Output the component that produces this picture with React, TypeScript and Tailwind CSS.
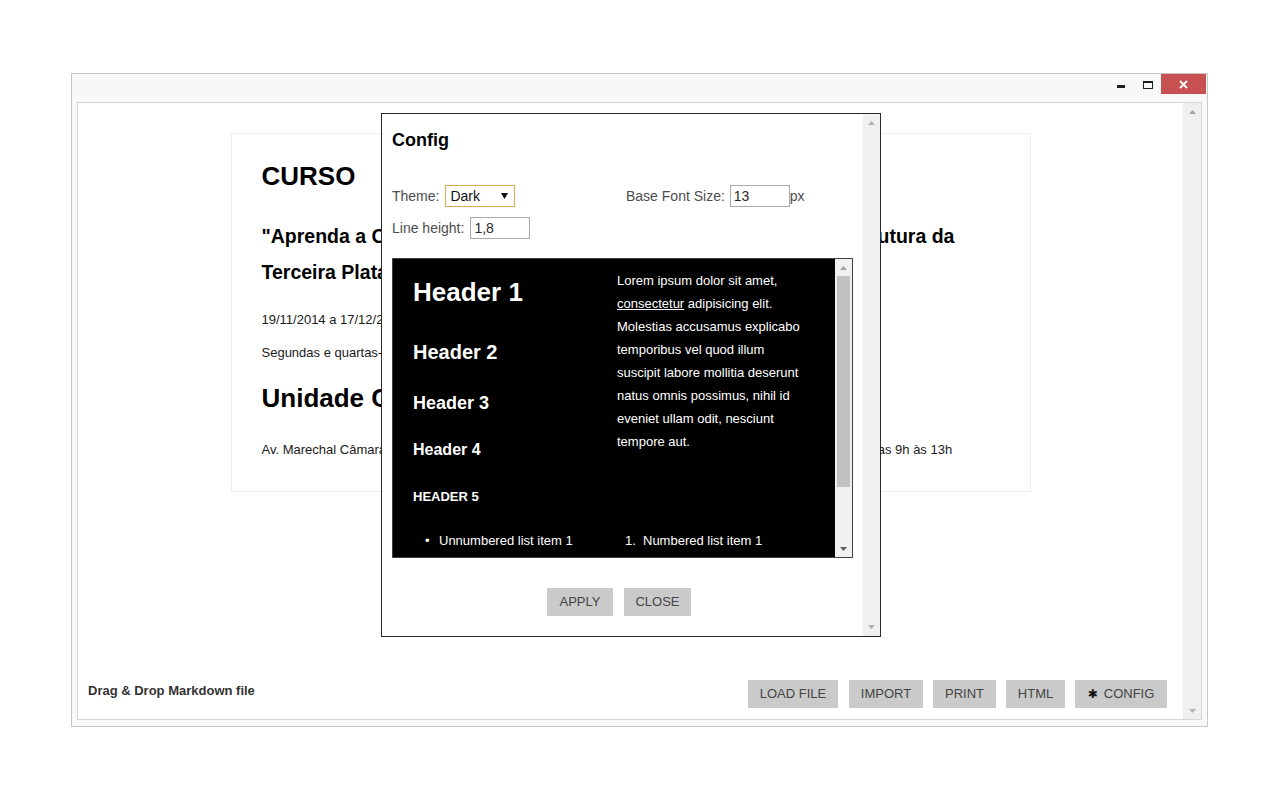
import React from "react";

function Tri({ dir, color = "#a3a3a3" }: { dir: "up" | "down"; color?: string }) {
  return (
    <svg width="7" height="4" viewBox="0 0 7 4" className="block">
      {dir === "up" ? (
        <polygon points="0,4 7,4 3.5,0" fill={color} />
      ) : (
        <polygon points="0,0 7,0 3.5,4" fill={color} />
      )}
    </svg>
  );
}

function GrayBtn({ children, className = "" }: { children: React.ReactNode; className?: string }) {
  return (
    <div
      className={
        "h-[28px] flex items-center justify-center bg-[#cacaca] text-[#444] text-[13px] uppercase " +
        className
      }
    >
      {children}
    </div>
  );
}

export default function App() {
  return (
    <div className="w-[1280px] h-[800px] bg-white relative overflow-hidden font-['Liberation_Sans',Arial,sans-serif]">
      <div className="pt-[73px] pl-[71px]">
        {/* window */}
        <div className="w-[1137px] h-[654px] border border-[#c9c9c9] bg-[#f8f8f8] flex flex-col">
          {/* title bar */}
          <div className="h-[28px] flex items-start justify-end">
            <div className="w-[8px] h-[3px] bg-[#1e1e1e] mt-[11px]" />
            <div className="w-[10px] h-[8px] border border-[#1e1e1e] border-t-2 mt-[7px] ml-[18px]" />
            <div className="w-[45px] h-[20px] bg-[#c75050] ml-[8px] mr-[1px] flex items-center justify-center">
              <svg width="9" height="9" viewBox="0 0 9 9">
                <path d="M1 1 L8 8 M8 1 L1 8" stroke="#fff" strokeWidth="1.8" />
              </svg>
            </div>
          </div>
          {/* inner frame */}
          <div className="mx-[5px] h-[618px] border border-[#d6d6d6] bg-white flex">
            <div className="flex-1 flex flex-col">
              {/* document card */}
              <div className="mx-auto mt-[30px] w-[800px] h-[359px] border border-[#eeeeee] px-[30px] pt-[19px] text-[#1a1a1a]">
                <h1 className="text-[26px] leading-[46px] font-bold text-black">CURSO</h1>
                <h2 className="mt-[19px] text-[19.5px] leading-[36px] font-bold text-black whitespace-nowrap">
                  <span className="inline-block w-[538px]">"Aprenda a Construir Aplicações na</span>
                  Infraestrutura da
                  <br />
                  Terceira Plataforma"
                </h2>
                <p className="mt-[18px] text-[13px] leading-[23px]">19/11/2014 a 17/12/2014</p>
                <p className="mt-[10px] text-[13px] leading-[23px]">Segundas e quartas-feiras, das 19h às 22h</p>
                <h1 className="mt-[11px] text-[26px] leading-[46px] font-bold text-black">Unidade Centro</h1>
                <p className="mt-[17px] text-[13px] leading-[23px] whitespace-nowrap">
                  <span className="inline-block w-[609px]">Av. Marechal Câmara, 160 - Centro - Rio de Janeiro</span>
                  das 9h às 13h
                </p>
              </div>
              {/* bottom bar */}
              <div className="mt-auto pl-[10px] pr-[16px] pb-[11px] flex items-center justify-between">
                <div className="mb-[6px] text-[13px] font-bold text-[#333]">Drag &amp; Drop Markdown file</div>
                <div className="flex gap-[10px]">
                  <GrayBtn className="w-[90px] mr-[1px]">Load File</GrayBtn>
                  <GrayBtn className="w-[74px]">Import</GrayBtn>
                  <GrayBtn className="w-[63px]">Print</GrayBtn>
                  <GrayBtn className="w-[59px]">HTML</GrayBtn>
                  <GrayBtn className="w-[92px]">
                    <span className="text-[12px] mr-[6px] text-[#111] font-['DejaVu_Sans',sans-serif]">✱</span>
                    Config
                  </GrayBtn>
                </div>
              </div>
            </div>
            {/* main scrollbar */}
            <div className="w-[18px] bg-[#f0f0f0] flex flex-col items-center justify-between pt-[7px] pb-[6px]">
              <Tri dir="up" />
              <Tri dir="down" color="#b5b5b5" />
            </div>
          </div>
        </div>
      </div>

      {/* Config modal */}
      <div className="absolute left-[381px] top-[113px] w-[500px] h-[524px] border border-[#2a2a2a] bg-white flex">
        <div className="flex-1 px-[10px] pt-[14px] flex flex-col">
          <div className="text-[18px] leading-[24px] font-bold text-black">Config</div>
          <div className="mt-[33px] h-[22px] flex items-center text-[14px] text-[#4d4d4d]">
            <div className="w-[234px] flex items-center">
              <span>Theme:</span>
              <div className="ml-[6px] w-[70px] h-[22px] border border-[#e2aa55] flex items-center justify-between pl-[4px] pr-[6px] text-[#111]">
                <span>Dark</span>
                <svg width="7" height="6" viewBox="0 0 7 6">
                  <polygon points="0,0 7,0 3.5,6" fill="#111" />
                </svg>
              </div>
            </div>
            <span>Base Font Size:</span>
            <div className="ml-[5px] w-[60px] h-[22px] border border-[#a9a9a9] flex items-center pl-[3px] text-[#2a2a2a]">13</div>
            <span>px</span>
          </div>
          <div className="mt-[10px] h-[22px] flex items-center text-[14px] text-[#4d4d4d]">
            <span>Line height:</span>
            <div className="ml-[6px] w-[60px] h-[22px] border border-[#a9a9a9] flex items-center pl-[3px] text-[#2a2a2a]">1,8</div>
          </div>
          {/* preview */}
          <div className="mt-[19px] w-[461px] h-[300px] border border-[#404040] bg-black flex">
            <div className="flex-1 overflow-hidden pl-[20px] pt-[10px] text-white grid grid-cols-[204px_1fr] gap-y-[20px] content-start">
              <div className="flex flex-col font-bold">
                <div className="text-[26px] leading-[46px]">Header 1</div>
                <div className="mt-[19px] text-[20px] leading-[36px]">Header 2</div>
                <div className="mt-[17px] text-[18px] leading-[32px]">Header 3</div>
                <div className="mt-[17px] text-[16px] leading-[28px]">Header 4</div>
                <div className="mt-[21px] text-[13px] leading-[24px] uppercase">Header 5</div>
              </div>
              <p className="text-[13px] leading-[23px] whitespace-nowrap">
                Lorem ipsum dolor sit amet,
                <br />
                <span className="underline">consectetur</span> adipisicing elit.
                <br />
                Molestias accusamus explicabo
                <br />
                temporibus vel quod illum
                <br />
                suscipit labore mollitia deserunt
                <br />
                natus omnis possimus, nihil id
                <br />
                eveniet ullam odit, nesciunt
                <br />
                tempore aut.
              </p>
              <ul className="text-[13px] leading-[24px]">
                <li className="flex">
                  <span className="w-[26px] pl-[12px]">•</span>
                  Unnumbered list item 1
                </li>
              </ul>
              <ol className="text-[13px] leading-[24px]">
                <li className="flex">
                  <span className="w-[26px] pl-[8px]">1.</span>
                  Numbered list item 1
                </li>
              </ol>
            </div>
            <div className="w-[17px] bg-[#f0f0f0] flex flex-col items-center">
              <div className="h-[17px] flex items-center justify-center">
                <Tri dir="up" />
              </div>
              <div className="w-[13px] h-[211px] bg-[#c1c1c1]" />
              <div className="flex-1" />
              <div className="h-[17px] flex items-center justify-center">
                <Tri dir="down" color="#606060" />
              </div>
            </div>
          </div>
          <div className="mt-[30px] flex justify-center gap-[11px] pr-[7px]">
            <GrayBtn className="w-[66px]">Apply</GrayBtn>
            <GrayBtn className="w-[67px]">Close</GrayBtn>
          </div>
        </div>
        <div className="w-[17px] bg-[#f0f0f0] flex flex-col items-center justify-between pt-[7px] pb-[7px]">
          <Tri dir="up" color="#b0b0b0" />
          <Tri dir="down" color="#b0b0b0" />
        </div>
      </div>
    </div>
  );
}
